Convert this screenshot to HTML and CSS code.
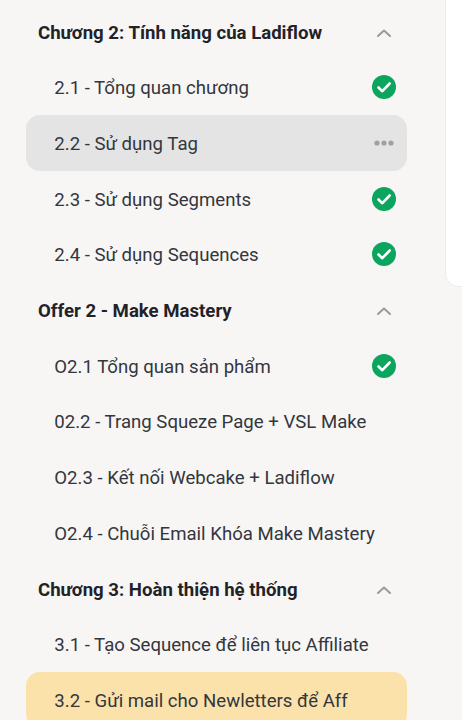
FILE: index.html
```html
<!DOCTYPE html>
<html lang="vi">
<head>
<meta charset="utf-8">
<title>Ladiflow</title>
<link rel="stylesheet" href="styles.css">
</head>
<body>
<div class="page">
  <aside class="sidebar">
    <section class="group">
      <div class="head"><span>Chương 2: Tính năng của Ladiflow</span><svg class="chev" viewBox="0 0 14 8"><path d="M1 7l6-5.5L13 7"/></svg></div>
      <div class="item"><span class="label">2.1 - Tổng quan chương</span><svg class="check" viewBox="0 0 24 24"><circle cx="12" cy="12" r="12"/><path d="M6.5 12.5l3.8 3.7 7.4-7.7"/></svg></div>
      <div class="item current"><span class="label">2.2 - Sử dụng Tag</span><svg class="dots" viewBox="0 0 20 6"><circle cx="3" cy="3" r="2.6"/><circle cx="10" cy="3" r="2.6"/><circle cx="17" cy="3" r="2.6"/></svg></div>
      <div class="item"><span class="label">2.3 - Sử dụng Segments</span><svg class="check" viewBox="0 0 24 24"><circle cx="12" cy="12" r="12"/><path d="M6.5 12.5l3.8 3.7 7.4-7.7"/></svg></div>
      <div class="item"><span class="label">2.4 - Sử dụng Sequences</span><svg class="check" viewBox="0 0 24 24"><circle cx="12" cy="12" r="12"/><path d="M6.5 12.5l3.8 3.7 7.4-7.7"/></svg></div>
    </section>
    <section class="group">
      <div class="head"><span>Offer 2 - Make Mastery</span><svg class="chev" viewBox="0 0 14 8"><path d="M1 7l6-5.5L13 7"/></svg></div>
      <div class="item"><span class="label">O2.1 Tổng quan sản phẩm</span><svg class="check" viewBox="0 0 24 24"><circle cx="12" cy="12" r="12"/><path d="M6.5 12.5l3.8 3.7 7.4-7.7"/></svg></div>
      <div class="item"><span class="label">02.2 - Trang Squeze Page + VSL Make</span></div>
      <div class="item"><span class="label">O2.3 - Kết nối Webcake + Ladiflow</span></div>
      <div class="item"><span class="label">O2.4 - Chuỗi Email Khóa Make Mastery</span></div>
    </section>
    <section class="group">
      <div class="head"><span>Chương 3: Hoàn thiện hệ thống</span><svg class="chev" viewBox="0 0 14 8"><path d="M1 7l6-5.5L13 7"/></svg></div>
      <div class="item"><span class="label">3.1 - Tạo Sequence để liên tục Affiliate</span></div>
      <div class="item active"><span class="label">3.2 - Gửi mail cho Newletters để Aff</span></div>
    </section>
  </aside>
  <main class="panel"></main>
</div>
</body>
</html>
```

FILE: styles.css
```css
* { box-sizing: border-box; }
html, body { margin: 0; height: 100%; overflow: hidden; }
body { background: #f8f6f5; font-family: Roboto, "Noto Sans", sans-serif; color: #33373d; }
.page { display: flex; align-items: flex-start; height: 720px; }
.sidebar { width: 445px; flex: none; padding: 3.6px 38px 0 26px; height: 720px; overflow: hidden; }
.group { display: flex; flex-direction: column; }
.head { height: 55.7px; display: flex; align-items: center; justify-content: space-between; padding: 2.4px 16.5px 0 12px; font-size: 18.6px; font-weight: 700; color: #1f2328; flex: none; }
.chev { width: 14px; height: 8px; fill: none; stroke: #9a9a9a; stroke-width: 2; stroke-linecap: round; stroke-linejoin: round; }
.item { height: 55.7px; display: flex; align-items: center; justify-content: space-between; padding: 0 11px 0 28.3px; border-radius: 14px; font-size: 18.6px; flex: none; }
.label { display: block; padding-top: 2.4px; }
.current { background: #e4e4e4; }
.active { background: #fbe2ab; }
.check { width: 24px; height: 24px; flex: none; }
.check circle { fill: #0ca55f; }
.check path { fill: none; stroke: #fff; stroke-width: 2.6; stroke-linecap: round; stroke-linejoin: round; }
.dots { width: 20px; height: 6px; flex: none; fill: #a0a0a0; margin-right: 2px; }
.panel { flex: 1; height: 287px; background: #fff; border-left: 1px solid #ececec; border-bottom: 1px solid #ececec; border-bottom-left-radius: 14px; }
```
